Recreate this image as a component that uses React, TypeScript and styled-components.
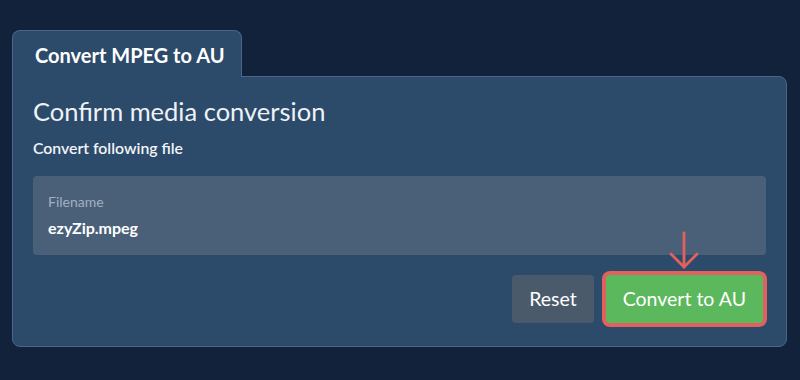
import React from "react";
import styled, { createGlobalStyle } from "styled-components";

const Global = createGlobalStyle`
  html, body { margin: 0; padding: 0; background: #11223a; }
  body { font-family: Lato, "Noto Sans", sans-serif; color: #ffffff; }
  * { box-sizing: border-box; }
`;

const Page = styled.div`
  width: 800px;
  height: 380px;
  padding: 30px 13px 0 12px;
  background: #11223a;
`;

const Tab = styled.div`
  position: relative;
  z-index: 1;
  width: 230px;
  height: 47px;
  margin-bottom: -1px;
  padding: 12px 0 0 22px;
  background: #2c4a6a;
  border: 1px solid #4b6687;
  border-bottom: none;
  border-radius: 8px 8px 0 0;
  font-size: 20px;
  font-weight: 700;
  line-height: 24px;
`;

const Panel = styled.div`
  position: relative;
  height: 271px;
  padding: 19px 20px 0 20px;
  background: #2c4a6a;
  border: 1px solid #4b6687;
  border-radius: 0 8px 8px 8px;
`;

const Heading = styled.h3`
  margin: 0;
  font-size: 25.5px;
  font-weight: 400;
  line-height: 1.2;
  color: #eef2f6;
`;

const Sub = styled.p`
  margin: 12px 0 0 0;
  font-size: 15.8px;
  font-weight: 600;
  line-height: 1.2;
  color: #f2f4f7;
`;

const FileBox = styled.div`
  margin-top: 18px;
  height: 79px;
  padding: 18px 15px 0 15px;
  background: #4a6078;
  border-radius: 4px;
  display: flex;
  flex-direction: column;
  gap: 8px;
`;

const Label = styled.div`
  font-size: 14px;
  line-height: 1.2;
  color: #a3b0bf;
`;

const Value = styled.div`
  font-size: 16px;
  font-weight: 700;
  line-height: 1.2;
  color: #ffffff;
`;

const Actions = styled.div`
  margin-top: 20px;
  padding-right: 3px;
  display: flex;
  justify-content: flex-end;
  gap: 12px;
`;

const Button = styled.button<{ $variant: "reset" | "primary" }>`
  position: relative;
  height: 48px;
  padding: 0 17px;
  border: none;
  border-radius: 4px;
  font-family: Lato, "Noto Sans", sans-serif;
  font-size: 19.5px;
  font-weight: 400;
  line-height: 1;
  color: #ffffff;
  cursor: pointer;
  background: ${(p) => (p.$variant === "primary" ? "#5cb85c" : "#4b5a6b")};
  box-shadow: ${(p) => (p.$variant === "primary" ? "0 0 0 4px #e0615d" : "none")};
`;

const Arrow = styled.svg`
  position: absolute;
  left: 50%;
  top: -42px;
  margin-left: -14px;
  width: 28px;
  height: 38px;
  overflow: visible;
`;

export default function App() {
  return (
    <>
      <Global />
      <Page>
        <Tab>Convert MPEG to AU</Tab>
        <Panel>
          <Heading>Confirm media conversion</Heading>
          <Sub>Convert following file</Sub>
          <FileBox>
            <Label>Filename</Label>
            <Value>ezyZip.mpeg</Value>
          </FileBox>
          <Actions>
            <Button $variant="reset">Reset</Button>
            <Button $variant="primary">
              <Arrow viewBox="0 0 28 38">
                <g stroke="#e0615d" strokeWidth="2.8" fill="none" strokeLinecap="round" strokeLinejoin="miter">
                  <line x1="14" y1="0" x2="14" y2="34" />
                  <polyline points="1,21 14,34 27,21" />
                </g>
              </Arrow>
              Convert to AU
            </Button>
          </Actions>
        </Panel>
      </Page>
    </>
  );
}
